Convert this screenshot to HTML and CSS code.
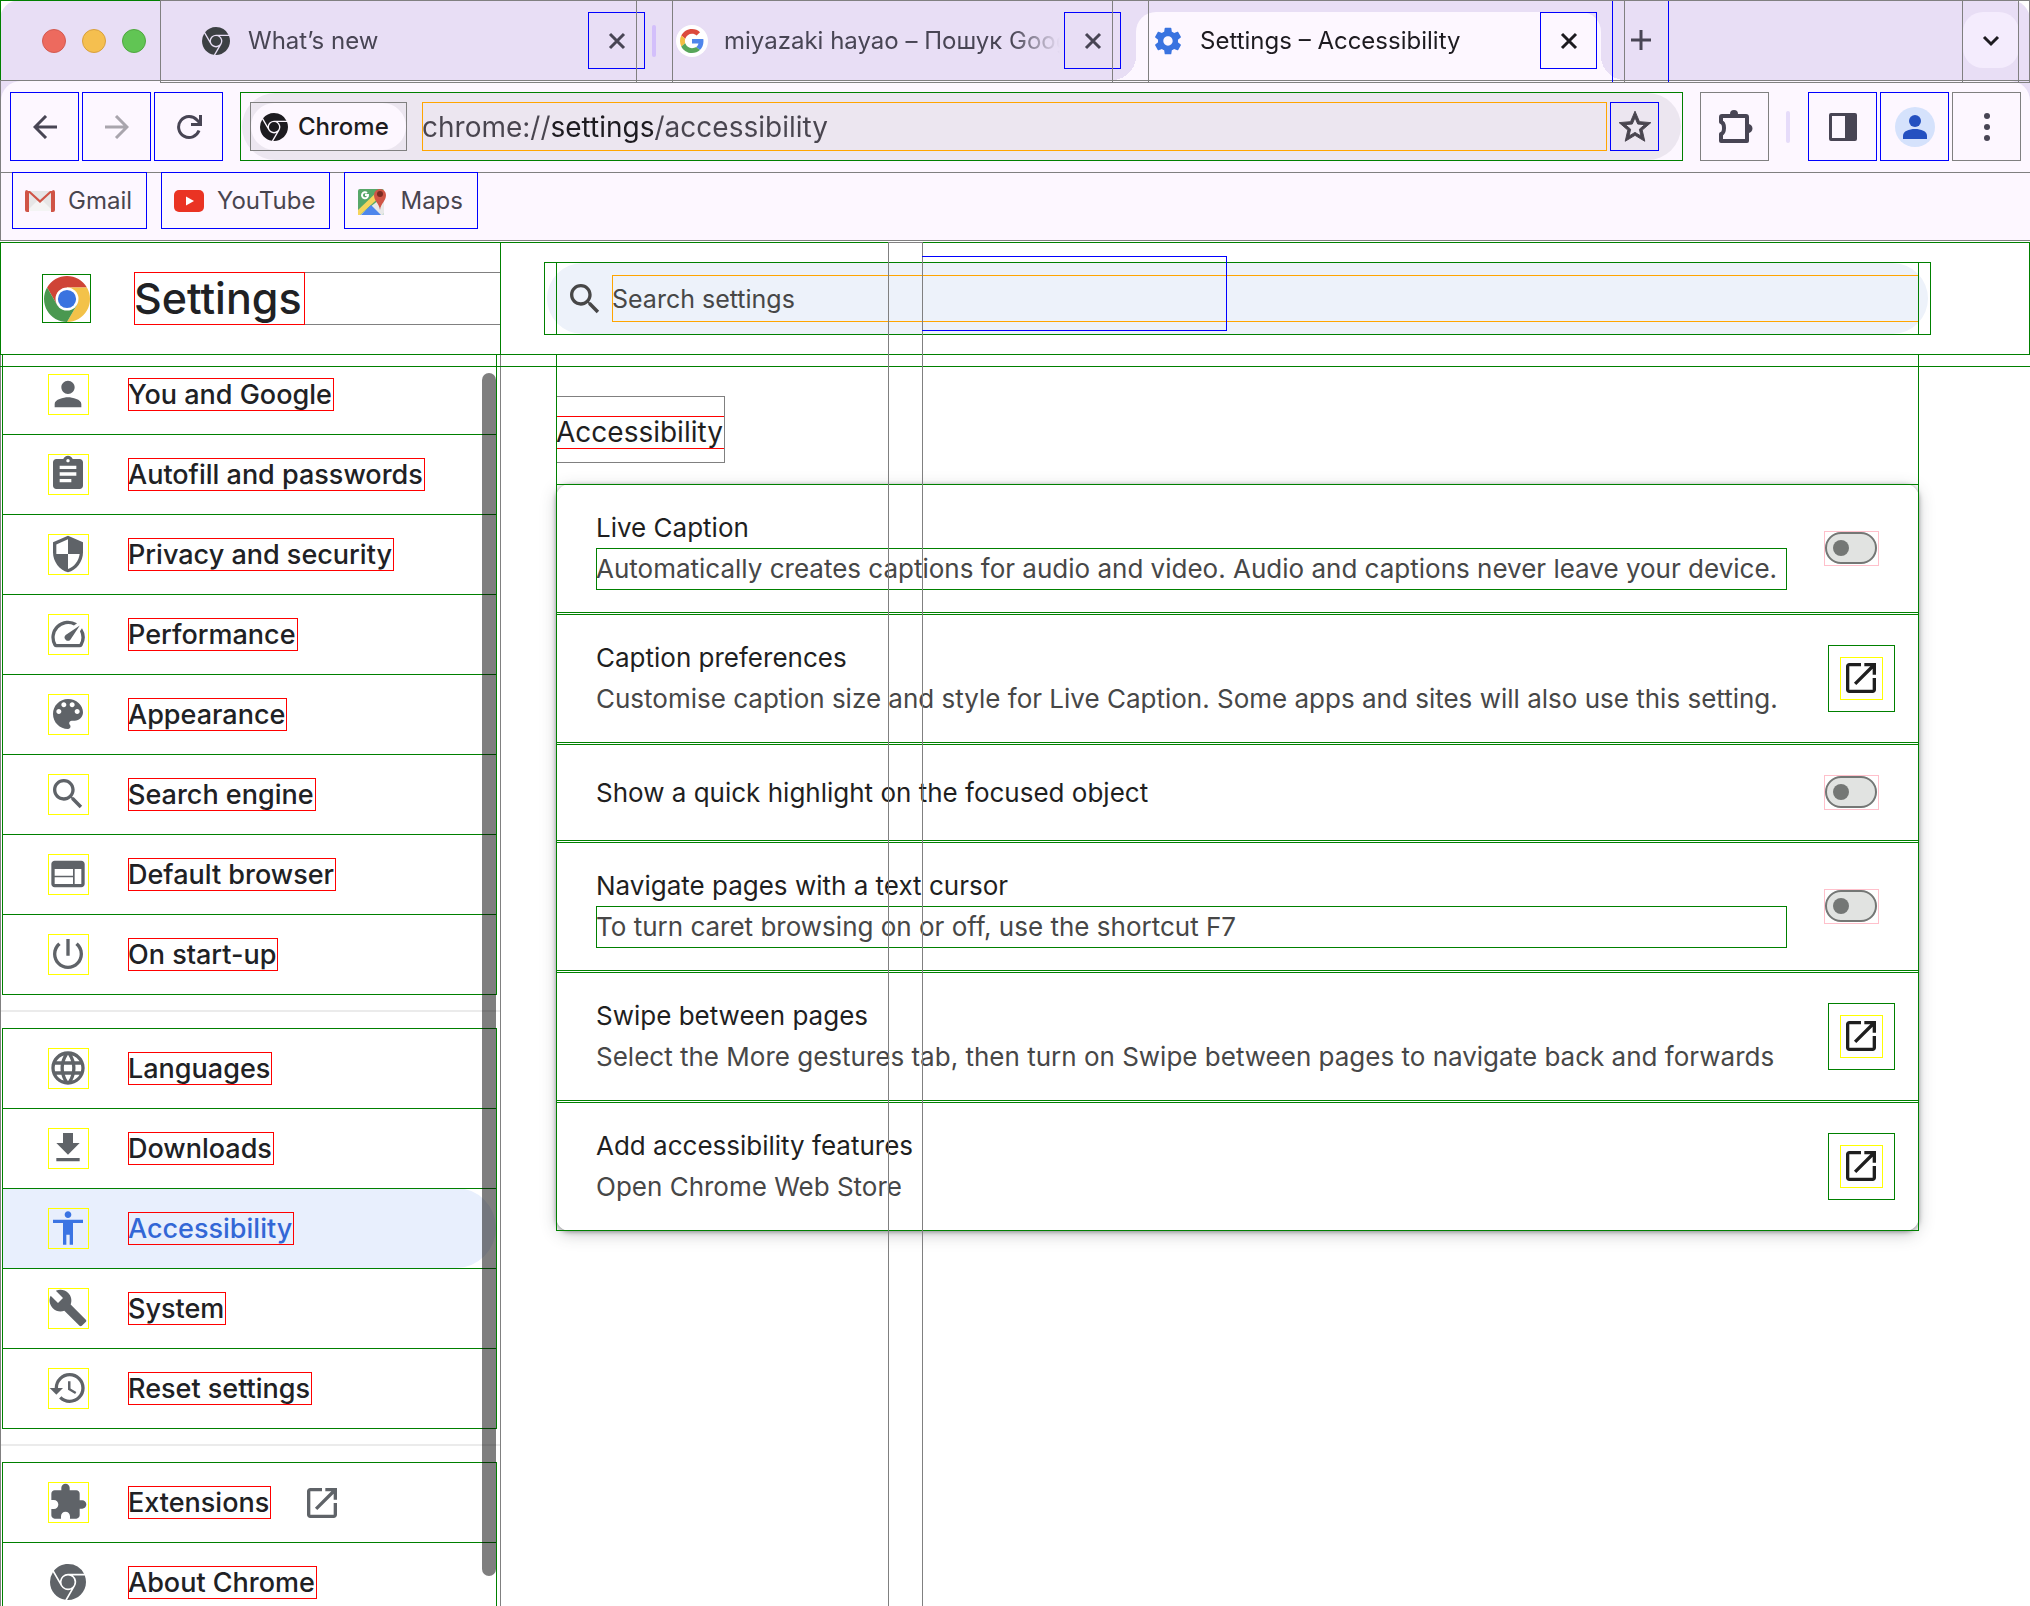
FILE: index.html
```html
<!DOCTYPE html>
<html lang="en">
<head>
<meta charset="utf-8">
<title>Settings – Accessibility</title>
<meta name="viewport" content="width=device-width, initial-scale=1">
<link rel="stylesheet" href="styles.css">
</head>
<body>
<svg class="sprite" aria-hidden="true">
  <symbol id="chrome" viewBox="0 0 24 24"><path d="M12 0C8.21 0 4.831 1.757 2.632 4.501l3.953 6.848A5.454 5.454 0 0 1 12 6.545h10.691A12 12 0 0 0 12 0zM1.931 5.47A11.943 11.943 0 0 0 0 12c0 6.012 4.42 10.991 10.189 11.864l3.953-6.847a5.45 5.45 0 0 1-6.865-2.29zm13.342 2.166a5.446 5.446 0 0 1 1.45 7.09l.002.001h-.002l-5.344 9.257c.206.01.413.016.621.016 6.627 0 12-5.373 12-12 0-1.54-.29-3.011-.818-4.364zM12 16.364a4.364 4.364 0 1 1 0-8.728 4.364 4.364 0 0 1 0 8.728Z"/></symbol>
  <symbol id="close" viewBox="0 0 18 18"><path d="M2 2l14 14M16 2L2 16" fill="none" stroke="currentColor" stroke-width="3"/></symbol>
  <symbol id="search" viewBox="0 0 24 24"><path d="M15.5 14h-.79l-.28-.27C15.41 12.59 16 11.11 16 9.5 16 5.91 13.09 3 9.5 3S3 5.91 3 9.5 5.91 16 9.5 16c1.61 0 3.09-.59 4.23-1.57l.27.28v.79l5 4.99L20.49 19l-4.99-5zm-6 0C7.01 14 5 11.99 5 9.5S7.01 5 9.5 5 14 7.01 14 9.5 11.99 14 9.5 14z"/></symbol>
  <symbol id="open" viewBox="0 0 24 24"><path d="M19 19H5V5h7V3H5c-1.11 0-2 .9-2 2v14c0 1.1.89 2 2 2h14c1.1 0 2-.9 2-2v-7h-2v7zM14 3v2h3.59l-9.83 9.83 1.41 1.41L19 6.41V10h2V3h-7z"/></symbol>
</svg>

<header class="browser">
  <div class="strip">
    <div class="lights">
      <button class="light light--close" aria-label="Close window"></button>
      <button class="light light--min" aria-label="Minimise window"></button>
      <button class="light light--max" aria-label="Zoom window"></button>
    </div>
    <div class="tabs">
      <div class="tab tab--divided">
        <span class="favicon"><svg class="i28"><use href="#chrome"/></svg></span>
        <span class="tab-title">What’s new</span>
        <button class="tab-close" aria-label="Close tab"><svg class="i18"><use href="#close"/></svg></button>
      </div>
      <div class="tab">
        <span class="favicon favicon--round"><svg class="i24" viewBox="0 0 48 48"><path fill="#dc4a3d" d="M24 9.5c3.54 0 6.71 1.22 9.21 3.6l6.85-6.85C35.9 2.38 30.47 0 24 0 14.62 0 6.51 5.38 2.56 13.22l7.98 6.19C12.43 13.72 17.74 9.5 24 9.5z"/><path fill="#4f86ec" d="M46.98 24.55c0-1.57-.15-3.09-.38-4.55H24v9.02h12.94c-.58 2.96-2.26 5.48-4.78 7.18l7.73 6c4.51-4.18 7.09-10.36 7.09-17.65z"/><path fill="#f2bd42" d="M10.53 28.59c-.48-1.45-.76-2.99-.76-4.59s.27-3.14.76-4.59l-7.98-6.19C.92 16.46 0 20.12 0 24c0 3.88.92 7.54 2.56 10.78l7.97-6.19z"/><path fill="#57a65a" d="M24 48c6.48 0 11.93-2.13 15.89-5.81l-7.73-6c-2.15 1.45-4.92 2.3-8.16 2.3-6.26 0-11.57-4.22-13.47-9.91l-7.98 6.19C6.51 42.62 14.62 48 24 48z"/></svg></span>
        <span class="tab-title">miyazaki hayao – Пошук Google</span>
        <button class="tab-close" aria-label="Close tab"><svg class="i18"><use href="#close"/></svg></button>
      </div>
      <div class="tab tab--active">
        <span class="favicon favicon--blue"><svg class="i32" viewBox="0 0 24 24"><path d="M19.43 12.98c.04-.32.07-.64.07-.98s-.03-.66-.07-.98l2.11-1.65c.19-.15.24-.42.12-.64l-2-3.46c-.12-.22-.39-.3-.61-.22l-2.49 1c-.52-.4-1.08-.73-1.69-.98l-.38-2.65C14.46 2.18 14.25 2 14 2h-4c-.25 0-.46.18-.49.42l-.38 2.65c-.61.25-1.17.59-1.69.98l-2.49-1c-.23-.09-.49 0-.61.22l-2 3.46c-.13.22-.07.49.12.64l2.11 1.65c-.04.32-.07.65-.07.98s.03.66.07.98l-2.11 1.65c-.19.15-.24.42-.12.64l2 3.46c.12.22.39.3.61.22l2.49-1c.52.4 1.08.73 1.69.98l.38 2.65c.03.24.24.42.49.42h4c.25 0 .46-.18.49-.42l.38-2.65c.61-.25 1.17-.59 1.69-.98l2.49 1c.23.09.49 0 .61-.22l2-3.46c.12-.22.07-.49-.12-.64l-2.11-1.65zM12 15.5c-1.93 0-3.5-1.57-3.5-3.5s1.57-3.5 3.5-3.5 3.5 1.57 3.5 3.5-1.57 3.5-3.5 3.5z"/></svg></span>
        <span class="tab-title">Settings – Accessibility</span>
        <button class="tab-close" aria-label="Close tab"><svg class="i18"><use href="#close"/></svg></button>
      </div>
      <button class="new-tab" aria-label="New tab"><svg class="i20" viewBox="0 0 20 20"><path d="M10 0v20M0 10h20" fill="none" stroke="currentColor" stroke-width="3"/></svg></button>
      <button class="tab-search" aria-label="Search tabs"><span class="tab-search-face"><svg class="i18" viewBox="0 0 18 18"><path d="M2 6l7 7 7-7" fill="none" stroke="currentColor" stroke-width="3"/></svg></span></button>
    </div>
  </div>

  <div class="toolbar">
    <button class="tool tool--blue" aria-label="Back"><svg class="i24" viewBox="0 0 24 24"><path d="M24 12H3M13 1L2 12l11 11" fill="none" stroke="currentColor" stroke-width="3"/></svg></button>
    <button class="tool tool--blue tool--off" aria-label="Forward"><svg class="i24" viewBox="0 0 24 24"><path d="M0 12h21M11 1l11 11-11 11" fill="none" stroke="currentColor" stroke-width="3"/></svg></button>
    <button class="tool tool--blue" aria-label="Reload"><svg class="i26" viewBox="0 0 26 26"><path d="M23 16.5A10.5 10.5 0 1 1 21 6L24 9M24.500 1v9.500H15" fill="none" stroke="currentColor" stroke-width="3"/></svg></button>
    <div class="omnibox">
      <span class="chip"><svg class="i28"><use href="#chrome"/></svg>Chrome</span>
      <input class="address" type="text" aria-label="Address" value="chrome://settings/accessibility">
      <button class="star" aria-label="Bookmark this page"><svg class="i38" viewBox="0 0 24 24"><path stroke="currentColor" stroke-width=".6" d="M22 9.24l-7.19-.62L12 2 9.19 8.63 2 9.24l5.46 4.73L5.82 21 12 17.27 18.18 21l-1.63-7.03L22 9.24zM12 15.4l-3.76 2.27 1-4.28-3.32-2.88 4.38-.38L12 6.1l1.71 4.04 4.38.38-3.32 2.88 1 4.28L12 15.4z"/></svg></button>
    </div>
    <button class="tool" aria-label="Extensions"><svg class="i36" viewBox="0 0 36 36"><path d="M5 7h24a1 1 0 0 1 1 1v24H4V25c4-1 4-11 0-12V8a1 1 0 0 1 1-1z" fill="none" stroke="currentColor" stroke-width="4" stroke-linejoin="round"/><path d="M13 5a4 4 0 0 1 8 0zM31 15a4 4 0 0 1 0 9z"/></svg></button>
    <span class="tool-divider"></span>
    <button class="tool tool--blue" aria-label="Side panel"><svg class="i30" viewBox="0 0 30 30"><path d="M3 1h24a2 2 0 0 1 2 2v24a2 2 0 0 1-2 2H3a2 2 0 0 1-2-2V3a2 2 0 0 1 2-2zm1 3v22h13V4z" fill-rule="evenodd"/></svg></button>
    <button class="tool tool--blue" aria-label="Profile"><svg class="i40" viewBox="0 0 40 40"><circle cx="20" cy="20" r="20" fill="#d5e2fc"/><circle cx="20" cy="14" r="6" fill="#2450c0"/><path d="M8 32v-3c0-5 6-7 12-7s12 2 12 7v3z" fill="#2450c0"/></svg></button>
    <button class="tool" aria-label="Menu"><svg class="i28" viewBox="0 0 28 28"><circle cx="14" cy="3" r="3"/><circle cx="14" cy="14" r="3"/><circle cx="14" cy="25" r="3"/></svg></button>
  </div>

  <nav class="bookmarks" aria-label="Bookmarks">
    <a class="bookmark" href="#gmail"><svg class="i30" viewBox="0 0 30 30"><path d="M2 5h26v20H2z" fill="#e6e6e6"/><path d="M2 25l10-10h6l10 10z" fill="#f4f4f4"/><path d="M2 5h3l10 9 10-9h3L15 17z" fill="#d05446"/><path d="M0 6q0-2 2-2l2 2v20H2q-2 0-2-2zM30 6q0-2-2-2l-2 2v20h2q2 0 2-2z" fill="#d05446"/></svg>Gmail</a>
    <a class="bookmark" href="#youtube"><svg class="i30" viewBox="0 0 30 30"><rect y="4" width="30" height="22" rx="5" fill="#ea3323"/><path d="M12 10.500l8 4.500-8 4.500z" fill="#fff"/></svg>YouTube</a>
    <a class="bookmark" href="#maps"><svg class="i30" viewBox="0 0 30 30"><rect x="1" y="3" width="26" height="26" rx="2" fill="#57a769"/><path d="M3 29L27 10v17q0 2-2 2z" fill="#e8e8e8"/><path d="M1 24L22 4h5v3L3 29H1z" fill="#f5d45c"/><path d="M4 29l10-10 10 10z" fill="#4f86ec"/><path d="M23 24c-1-7-6-9-6-15a6 6 0 0 1 12 0c0 6-5 8-6 15z" fill="#d05446"/><circle cx="23" cy="8" r="3" fill="#7a2b22"/><path d="M10 7a3 3 0 1 0 1 2H8" fill="none" stroke="#fff" stroke-width="2"/></svg>Maps</a>
  </nav>
</header>

<div class="page">
  <header class="head">
    <div class="brand">
      <span class="logo"><svg class="i46" viewBox="0 0 48 48"><path fill="#cf4436" d="M24 12h20.780A24 24 0 0 0 3.220 12L13.600 30 24 24z"/><path fill="#f3c249" transform="rotate(120 24 24)" d="M24 12h20.780A24 24 0 0 0 3.220 12L13.600 30 24 24z"/><path fill="#4a9850" transform="rotate(240 24 24)" d="M24 12h20.780A24 24 0 0 0 3.220 12L13.600 30 24 24z"/><circle cx="24" cy="24" r="12" fill="#fff"/><circle cx="24" cy="24" r="9.500" fill="#3973e0"/></svg></span>
      <div class="brand-name"><h1>Settings</h1></div>
    </div>
    <div class="search-box">
      <div class="search-inner">
        <svg class="i40"><use href="#search"/></svg>
        <input class="search-input" type="search" aria-label="Search settings" placeholder="Search settings">
      </div>
    </div>
  </header>

  <div class="columns">
    <nav class="menu" aria-label="Settings sections">
      <div class="menu-group">
        <a class="item" href="#people"><span class="icon"><svg class="i40" viewBox="0 0 24 24"><path d="M12 12c2.210 0 4-1.790 4-4s-1.790-4-4-4-4 1.790-4 4 1.790 4 4 4zm0 2c-2.670 0-8 1.340-8 4v2h16v-2c0-2.660-5.330-4-8-4z"/></svg></span><span class="label">You and Google</span></a>
        <a class="item" href="#autofill"><span class="icon"><svg class="i40" viewBox="0 0 24 24"><path d="M19 3h-4.180C14.400 1.840 13.300 1 12 1c-1.300 0-2.400.84-2.820 2H5c-1.100 0-2 .9-2 2v14c0 1.100.9 2 2 2h14c1.100 0 2-.9 2-2V5c0-1.100-.9-2-2-2zm-7 0c.55 0 1 .45 1 1s-.45 1-1 1-1-.45-1-1 .45-1 1-1zm2 14H7v-2h7v2zm3-4H7v-2h10v2zm0-4H7V7h10v2z"/></svg></span><span class="label">Autofill and passwords</span></a>
        <a class="item" href="#privacy"><span class="icon"><svg class="i40" viewBox="0 0 24 24"><path d="M12 1L3 5v6c0 5.550 3.840 10.740 9 12 5.160-1.260 9-6.450 9-12V5l-9-4zm0 10.990h7c-.53 4.120-3.280 7.790-7 8.940V12H5V6.300l7-3.110v8.800z"/></svg></span><span class="label">Privacy and security</span></a>
        <a class="item" href="#performance"><span class="icon"><svg class="i40" viewBox="0 0 24 24"><path d="M20.380 8.570l-1.230 1.850a8 8 0 0 1-.22 7.580H5.070A8 8 0 0 1 15.580 6.850l1.850-1.230A10 10 0 0 0 3.350 19a2 2 0 0 0 1.720 1h13.850a2 2 0 0 0 1.740-1 10 10 0 0 0-.27-10.440zm-9.790 6.840a2 2 0 0 0 2.830 0l5.660-8.490-8.490 5.660a2 2 0 0 0 0 2.830z"/></svg></span><span class="label">Performance</span></a>
        <a class="item" href="#appearance"><span class="icon"><svg class="i40" viewBox="0 0 24 24"><path d="M12 3c-4.970 0-9 4.030-9 9s4.030 9 9 9c.83 0 1.500-.67 1.500-1.500 0-.39-.15-.74-.39-1.010-.23-.26-.38-.61-.38-.99 0-.83.67-1.500 1.500-1.500H16c2.760 0 5-2.240 5-5 0-4.420-4.030-8-9-8zm-5.500 9c-.83 0-1.500-.67-1.500-1.500S5.670 9 6.500 9 8 9.670 8 10.500 7.330 12 6.500 12zm3-4C8.670 8 8 7.330 8 6.500S8.670 5 9.500 5s1.500.67 1.500 1.500S10.330 8 9.500 8zm5 0c-.83 0-1.500-.67-1.500-1.500S13.670 5 14.500 5s1.500.67 1.500 1.500S15.330 8 14.500 8zm3 4c-.83 0-1.500-.67-1.500-1.500S16.670 9 17.500 9s1.500.67 1.500 1.500-.67 1.500-1.500 1.500z"/></svg></span><span class="label">Appearance</span></a>
        <a class="item" href="#search-engine"><span class="icon"><svg class="i40"><use href="#search"/></svg></span><span class="label">Search engine</span></a>
        <a class="item" href="#default-browser"><span class="icon"><svg class="i40" viewBox="0 0 24 24"><path d="M20 4H4c-1.100 0-1.990.9-1.990 2L2 18c0 1.100.9 2 2 2h16c1.100 0 2-.9 2-2V6c0-1.100-.9-2-2-2zm-5 14H4v-4h11v4zm0-5H4V9h11v4zm5 5h-4V9h4v9z"/></svg></span><span class="label">Default browser</span></a>
        <a class="item" href="#start-up"><span class="icon"><svg class="i40" viewBox="0 0 24 24"><path d="M13 3h-2v10h2V3zm4.830 2.170l-1.420 1.420C17.990 7.860 19 9.810 19 12c0 3.870-3.130 7-7 7s-7-3.130-7-7c0-2.190 1.010-4.140 2.580-5.420L6.170 5.170C4.230 6.820 3 9.260 3 12c0 4.970 4.030 9 9 9s9-4.030 9-9c0-2.740-1.230-5.180-3.170-6.830z"/></svg></span><span class="label">On start-up</span></a>
      </div>
      <hr class="menu-rule">
      <div class="menu-group">
        <a class="item" href="#languages"><span class="icon"><svg class="i40" viewBox="0 0 24 24"><path d="M11.990 2C6.470 2 2 6.480 2 12s4.470 10 9.990 10C17.520 22 22 17.520 22 12S17.520 2 11.990 2zm6.930 6h-2.950c-.32-1.250-.78-2.450-1.380-3.560 1.840.63 3.370 1.910 4.330 3.560zM12 4.040c.83 1.200 1.480 2.530 1.910 3.960h-3.820c.43-1.430 1.080-2.760 1.910-3.960zM4.260 14C4.100 13.360 4 12.690 4 12s.1-1.360.26-2h3.380c-.08.66-.14 1.320-.14 2 0 .68.06 1.340.14 2H4.260zm.82 2h2.950c.32 1.250.78 2.450 1.380 3.560-1.840-.63-3.370-1.900-4.330-3.560zm2.950-8H5.080c.96-1.660 2.490-2.930 4.330-3.560C8.810 5.550 8.350 6.750 8.030 8zM12 19.960c-.83-1.200-1.480-2.530-1.910-3.960h3.820c-.43 1.430-1.080 2.760-1.910 3.960zM14.340 14H9.660c-.09-.66-.16-1.320-.16-2 0-.68.07-1.350.16-2h4.680c.09.65.16 1.320.16 2 0 .68-.07 1.340-.16 2zm.25 5.560c.6-1.110 1.060-2.310 1.380-3.560h2.950c-.96 1.650-2.490 2.930-4.330 3.560zM16.360 14c.08-.66.14-1.320.14-2 0-.68-.06-1.340-.14-2h3.380c.16.64.26 1.310.26 2s-.1 1.360-.26 2h-3.380z"/></svg></span><span class="label">Languages</span></a>
        <a class="item" href="#downloads"><span class="icon"><svg class="i40" viewBox="0 0 24 24"><path d="M19 9h-4V3H9v6H5l7 7 7-7zM5 18v2h14v-2H5z"/></svg></span><span class="label">Downloads</span></a>
        <a class="item item--current" href="#accessibility" aria-current="page"><span class="icon"><svg class="i40" viewBox="0 0 24 24"><path d="M12 2c1.100 0 2 .9 2 2s-.9 2-2 2-2-.9-2-2 .9-2 2-2zm9 7h-6v13h-2v-6h-2v6H9V9H3V7h18v2z"/></svg></span><span class="label">Accessibility</span></a>
        <a class="item" href="#system"><span class="icon"><svg class="i40" viewBox="0 0 24 24"><path d="M22.700 19l-9.100-9.100c.9-2.300.4-5-1.500-6.900-2-2-5-2.400-7.400-1.300L9 6 6 9 1.600 4.700C.4 7.100.9 10.100 2.900 12.100c1.900 1.900 4.600 2.400 6.900 1.500l9.100 9.100c.4.4 1 .4 1.400 0l2.300-2.300c.5-.4.5-1.100.1-1.400z"/></svg></span><span class="label">System</span></a>
        <a class="item" href="#reset"><span class="icon"><svg class="i40" viewBox="0 0 24 24"><path d="M13 3a9 9 0 0 0-9 9H1l3.890 3.890.07.14L9 12H6c0-3.870 3.130-7 7-7s7 3.130 7 7-3.130 7-7 7c-1.930 0-3.680-.79-4.940-2.060l-1.420 1.420A8.954 8.954 0 0 0 13 21a9 9 0 0 0 0-18zm-1 5v5l4.280 2.540.72-1.210-3.500-2.080V8H12z"/></svg></span><span class="label">Reset settings</span></a>
      </div>
      <hr class="menu-rule">
      <div class="menu-group">
        <a class="item" href="#extensions"><span class="icon"><svg class="i40" viewBox="0 0 24 24"><path d="M20.500 11H19V7c0-1.100-.9-2-2-2h-4V3.500C13 2.120 11.880 1 10.500 1S8 2.120 8 3.500V5H4c-1.100 0-1.990.9-1.990 2v3.800H3.500c1.490 0 2.700 1.210 2.700 2.700s-1.210 2.700-2.700 2.700H2V20c0 1.100.9 2 2 2h3.800v-1.500c0-1.490 1.210-2.700 2.700-2.700 1.490 0 2.700 1.210 2.700 2.700V22H17c1.100 0 2-.9 2-2v-4h1.500c1.380 0 2.500-1.120 2.500-2.500S21.880 11 20.500 11z"/></svg></span><span class="label">Extensions</span><svg class="item-open i40"><use href="#open"/></svg></a>
        <a class="item" href="#about"><span class="icon icon--plain"><svg class="i36"><use href="#chrome"/></svg></span><span class="label">About Chrome</span></a>
      </div>
      <span class="scroll-thumb"></span>
    </nav>

    <main class="main">
      <div class="content">
        <div class="section-title"><h2>Accessibility</h2></div>
        <div class="card">
          <div class="row">
            <div class="text"><label class="title" for="live">Live Caption</label><p class="desc desc--boxed">Automatically creates captions for audio and video. Audio and captions never leave your device.</p></div>
            <span class="switch"><input id="live" type="checkbox" role="switch"></span>
          </div>
          <div class="row row--link">
            <div class="text"><p class="title">Caption preferences</p><p class="desc">Customise caption size and style for Live Caption. Some apps and sites will also use this setting.</p></div>
            <button class="open" aria-label="Caption preferences"><span><svg class="i40"><use href="#open"/></svg></span></button>
          </div>
          <div class="row row--short">
            <div class="text"><label class="title" for="focus">Show a quick highlight on the focused object</label></div>
            <span class="switch"><input id="focus" type="checkbox" role="switch"></span>
          </div>
          <div class="row">
            <div class="text"><label class="title" for="caret">Navigate pages with a text cursor</label><p class="desc desc--boxed">To turn caret browsing on or off, use the shortcut F7</p></div>
            <span class="switch"><input id="caret" type="checkbox" role="switch"></span>
          </div>
          <div class="row row--link">
            <div class="text"><p class="title">Swipe between pages</p><p class="desc">Select the More gestures tab, then turn on Swipe between pages to navigate back and forwards</p></div>
            <button class="open" aria-label="Swipe between pages"><span><svg class="i40"><use href="#open"/></svg></span></button>
          </div>
          <div class="row row--link">
            <div class="text"><p class="title">Add accessibility features</p><p class="desc">Open Chrome Web Store</p></div>
            <button class="open" aria-label="Add accessibility features"><span><svg class="i40"><use href="#open"/></svg></span></button>
          </div>
        </div>
      </div>
    </main>
  </div>
  <span class="guide"></span>
  <span class="guide-box"></span>
</div>
</body>
</html>
```
FILE: styles.css
```css
:root {
  --gray: #808080;
  --green: #008000;
  --blue: #0000ff;
  --strip: #e8def5;
  --bar: #fdf7ff;
  --ink: #484554;
}

*, *::before, *::after { box-sizing: border-box; }

body {
  margin: 0;
  height: 100vh;
  overflow: hidden;
  display: flex;
  flex-direction: column;
  background: #fff;
  font-family: Inter, "Liberation Sans", sans-serif;
  color: #1f1f1f;
}

h1, h2, p { margin: 0; font-weight: 400; }
a { color: inherit; text-decoration: none; }
button { border: 0; padding: 0; background: none; color: inherit; font: inherit; display: flex; align-items: center; justify-content: center; }
input { font: inherit; border: 0; padding: 0; margin: 0; background: none; min-width: 0; }
svg { fill: currentColor; display: block; flex: none; }

.sprite { position: absolute; width: 0; height: 0; }
.i18 { width: 18px; height: 18px; }
.i20 { width: 20px; height: 20px; }
.i24 { width: 24px; height: 24px; }
.i26 { width: 26px; height: 26px; }
.i28 { width: 28px; height: 28px; }
.i30 { width: 30px; height: 30px; }
.i32 { width: 32px; height: 32px; }
.i36 { width: 36px; height: 36px; }
.i38 { width: 38px; height: 38px; }
.i40 { width: 40px; height: 40px; }
.i46 { width: 46px; height: 46px; }

/* Inspector-style boxes drawn over each part */
.lights, .tabs, .tab, .tab-close, .new-tab, .tab-search, .tool, .omnibox, .chip,
.address, .star, .bookmark, .head, .brand, .logo, .brand-name, h1, h2,
.search-box, .search-inner, .search-input, .item, .icon, .label,
.content, .section-title, .row, .desc--boxed, .switch, .open, .open span {
  outline: 1px solid var(--gray);
  outline-offset: -1px;
}
.lights, .omnibox, .head, .brand, .logo, .search-box, .search-inner, .item, .content, .row, .desc--boxed, .open { outline-color: var(--green); }
.tab-close, .new-tab, .tool--blue, .star, .bookmark { outline-color: var(--blue); }
.address, .search-input { outline-color: #ffa500; }
.icon, .open span { outline-color: #ffff00; }
h1, h2, .label { outline-color: #ff0000; }
.switch { outline-color: #ffc0cb; }

/* Tab strip */
.browser { flex: none; background: linear-gradient(#fff 0 40px, var(--strip) 40px 100px, var(--bar) 100px); }
.strip { display: flex; height: 80px; background: var(--strip); border-radius: 20px 20px 0 0; color: var(--ink); }
.lights { flex: none; width: 161px; height: 81px; padding-left: 42px; display: flex; align-items: center; gap: 16px; }
.light { width: 24px; height: 24px; border-radius: 50%; border: 1px solid #d35a50; background: #ed6a5e; }
.light--min { background: #f5bf4f; border-color: #d8a03d; }
.light--max { background: #61c554; border-color: #4fa73f; }
.tabs { position: relative; z-index: 1; flex: 1; min-width: 0; height: 83px; margin-left: -1px; display: flex; padding-right: 11px; }
.tab { position: relative; flex: 0 1 513px; min-width: 0; display: flex; align-items: center; padding: 12px 28px 14px 40px; font-size: 24px; }
.tab + .tab { margin-left: -37px; }
.tab--divided::after { content: ""; position: absolute; right: 17px; top: 25px; width: 4px; height: 32px; border-radius: 2px; background: #d3bffb; }
.tab--active { color: #1d1b20; }
.tab--active::before { content: ""; position: absolute; z-index: -1; inset: 12px 24px 3px; border-radius: 20px 20px 0 0; background: var(--bar); }
.tab--active::after {
  content: ""; position: absolute; z-index: -1; inset: auto 0 3px; height: 24px;
  background:
    radial-gradient(circle at 0 0, transparent 24px, var(--bar) 24px) left / 24px 24px no-repeat,
    radial-gradient(circle at 100% 0, transparent 24px, var(--bar) 24px) right / 24px 24px no-repeat;
}
.favicon { flex: none; width: 32px; height: 32px; margin-right: 16px; border-radius: 50%; display: flex; align-items: center; justify-content: center; color: #3c4043; }
.favicon--round { background: #fff; }
.favicon--blue { color: #3973e0; }
.tab-title { flex: 1; overflow: hidden; white-space: nowrap; line-height: 32px; margin-right: 4px; mask-image: linear-gradient(90deg, #000 calc(100% - 48px), transparent); }
.tab-close { flex: none; width: 57px; height: 57px; }
.new-tab { flex: none; width: 57px; margin-left: -13px; padding-bottom: 3px; }
.tab-search { flex: none; width: 57px; margin-left: auto; color: #1d1b20; align-items: flex-start; padding-top: 12px; }
.tab-search-face { width: 56px; height: 56px; border-radius: 20px; background: #f4ecfd; display: flex; align-items: center; justify-content: center; }

/* Toolbar */
.toolbar {
  position: relative; z-index: 0; display: flex; align-items: center; gap: 3px;
  height: 93px; padding: 0 9px; color: var(--ink);
  border: 1px solid var(--gray); border-right: 0;
}
.toolbar::before { content: ""; position: absolute; z-index: -2; inset: 0; border-radius: 20px 20px 0 0; background: var(--bar); }
.tool { flex: none; width: 69px; height: 69px; }
.tool--off { color: #a9a5ad; }
.omnibox { position: relative; flex: 1; min-width: 0; height: 69px; margin: 0 14px; padding: 0 24px 0 10px; display: flex; align-items: center; }
.omnibox::before { content: ""; position: absolute; z-index: -1; inset: 1px 2px; border-radius: 34px; background: #ece6f0; }
.chip { position: relative; flex: none; width: 157px; height: 49px; padding-left: 10px; display: flex; align-items: center; gap: 10px; font-size: 24px; font-weight: 500; color: #1d1b20; }
.chip::before { content: ""; position: absolute; z-index: -1; inset: 1px; border-radius: 24px; background: var(--bar); }
.address {
  flex: 1; height: 49px; margin: 0 3px 0 15px; font-size: 28px; color: transparent;
  background: linear-gradient(90deg, #49454f 129px, #1d1b20 129px 234px, #49454f 234px);
  -webkit-background-clip: text; background-clip: text;
}
.star { flex: none; width: 49px; height: 49px; color: #49454f; }
.tool-divider { flex: none; width: 4px; height: 32px; margin: 0 15px 0 14px; border-radius: 2px; background: #e6dcfa; }

/* Bookmarks bar */
.bookmarks { display: flex; align-items: flex-start; gap: 14px; height: 69px; margin-top: -1px; padding-left: 11px; font-size: 24px; color: #49454f; border-left: 1px solid var(--gray); border-bottom: 1px solid var(--gray); position: relative; }
.bookmark { display: flex; align-items: center; gap: 13px; height: 57px; padding: 0 15px 0 13px; }

/* Settings page */
.page { position: relative; flex: 1; min-height: 0; margin-top: 1px; display: flex; flex-direction: column; background: #fff; }
.head { position: relative; z-index: 1; flex: none; display: flex; align-items: center; height: 113px; }
.head::after { content: ""; position: absolute; left: 0; right: 0; top: 112px; height: 13px; border: 1px solid var(--green); border-width: 1px 0; }
.brand { flex: none; align-self: stretch; width: 501px; padding-left: 42px; display: flex; align-items: center; }
.logo { width: 49px; height: 49px; display: flex; align-items: center; justify-content: center; }
.brand-name { flex: 1; margin-left: 43px; display: flex; }
h1 { position: relative; font-size: 43px; line-height: 53px; font-weight: 500; padding-right: 3px; color: #202124; }
.search-box { position: relative; flex: 1; min-width: 0; height: 73px; margin: 0 99px 0 43px; padding: 0 12px; }
.search-box::before { content: ""; position: absolute; z-index: -1; inset: 1px 3px; border-radius: 36px; background: #edf2fa; }
.search-inner { height: 73px; padding-left: 9px; display: flex; align-items: center; gap: 7px; color: #474747; }
.search-input { flex: 1; height: 47px; font-size: 25px; appearance: none; }
.search-input::placeholder { color: #474747; opacity: 1; }

.columns { flex: 1; min-height: 0; display: flex; margin-top: -1px; }
.menu { position: relative; z-index: 0; flex: none; width: 501px; overflow: hidden; box-shadow: inset 1px 0 var(--gray), inset -1px 0 var(--gray); }
.menu-group { margin: 0 4px 0 2px; display: flex; flex-direction: column; }
.item { position: relative; flex: none; height: 81px; padding-left: 46px; display: flex; align-items: center; color: #202124; font-size: 27px; font-weight: 500; }
.item + .item { margin-top: -1px; }
.icon { flex: none; width: 41px; height: 41px; margin-right: 39px; color: #5f6368; }
.icon--plain { outline: 0; padding: 2px; }
.label { line-height: 33px; padding-right: 2px; }
.item-open { margin-left: 31px; color: #5f6368; }
.item--current { color: #3367d6; }
.item--current::before { content: ""; position: absolute; z-index: -1; inset: 0 1px 1px 0; border-radius: 0 40px 40px 0; background: #e8effd; }
.item--current .icon { color: #3b74e3; }
.menu-rule { height: 2px; margin: 15px 1px 16px; border: 0; background: #ebebeb; }
.scroll-thumb { position: absolute; right: 5px; top: 19px; width: 14px; height: 1203px; border-radius: 7px; background: rgba(0, 0, 0, .5); }

.main { flex: 1; min-width: 0; padding: 0 111px 0 55px; }
.content { padding-top: 42px; }
.section-title { width: fit-content; height: 67px; padding-top: 20px; margin-bottom: 21px; }
h2 { font-size: 28px; line-height: 33px; padding-right: 2px; }
.card { display: flex; flex-direction: column; gap: 1px; border-radius: 14px; background: #fff; box-shadow: 0 1px 4px rgba(60, 64, 67, .5), 0 4px 16px rgba(60, 64, 67, .25); }
.row { min-height: 129px; padding: 0 40px; display: flex; align-items: center; gap: 37px; }
.row--short { min-height: 97px; }
.row--link { padding-right: 24px; }
.text { flex: 1; min-width: 0; font-size: 26px; }
.title { display: block; line-height: 40px; }
.desc { line-height: 42px; color: #474747; }
.switch { flex: none; width: 55px; height: 35px; padding: 1px; }
.switch input { appearance: none; display: flex; align-items: center; width: 52px; height: 32px; border: 2px solid #747775; border-radius: 16px; background: #e1e3e1; padding-left: 6px; }
.switch input::before { content: ""; width: 16px; height: 16px; border-radius: 50%; background: #747775; }
.open { flex: none; width: 67px; height: 67px; }
.open span { width: 43px; height: 43px; padding: 1px; }

/* Overlay guides */
.guide { position: absolute; z-index: 2; left: 888px; top: 0; bottom: 0; width: 35px; border: 1px solid var(--gray); border-bottom: 0; pointer-events: none; }
.guide-box { position: absolute; z-index: 2; left: 922px; top: 14px; width: 305px; height: 75px; border: 1px solid var(--blue); border-left: 0; pointer-events: none; }
```
